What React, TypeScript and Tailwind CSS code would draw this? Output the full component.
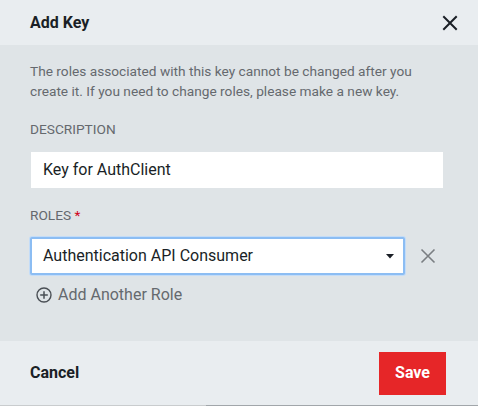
import React from "react";

export default function App() {
  return (
    <div
      className="w-[478px] h-[406px] flex flex-col overflow-hidden"
      style={{ fontFamily: "Roboto, 'Liberation Sans', sans-serif" }}
    >
      <div className="h-[45px] shrink-0 bg-[#e9edf0] flex items-center justify-between pl-[30px] pr-[20px]">
        <h2 className="text-[16px] font-bold text-[#1a1f26]">Add Key</h2>
        <svg width="16" height="16" viewBox="0 0 16 16" className="mt-[1px]">
          <path d="M2 2 L14 14 M14 2 L2 14" stroke="#1a1f26" strokeWidth="2" strokeLinecap="square" />
        </svg>
      </div>

      <div className="h-[296px] shrink-0 bg-[#dfe4e7] px-[30px] pt-[16px]">
        <p className="text-[13.7px] leading-[20px] text-[#65696e] w-[400px]">
          The roles associated with this key cannot be changed after you create it. If you need to change roles, please make a new key.
        </p>
        <div className="mt-[18px] text-[13.7px] leading-[20px] text-[#65696e] uppercase">Description</div>
        <div className="mt-[13px] ml-[1px] w-[412px] h-[36px] bg-white flex items-center pl-[12px] text-[16px] text-[#1a1f26]">
          Key for AuthClient
        </div>
        <div className="mt-[17px] text-[13.7px] leading-[20px] text-[#65696e] uppercase">
          Roles <span className="text-[#d0021b]">*</span>
        </div>
        <div className="mt-[12px] flex items-center">
          <div className="w-[375px] h-[38px] bg-white border-2 border-[#8cbdf3] rounded-[2px] shadow-[0_0_0_1px_#c3dcf8] flex items-center justify-between pl-[11px] pr-[9px] text-[16px] text-[#1a1f26]">
            <span>Authentication API Consumer</span>
            <svg width="8" height="5" viewBox="0 0 8 5">
              <path d="M0 0 L8 0 L4 4.5 Z" fill="#1a1f26" />
            </svg>
          </div>
          <svg width="16" height="16" viewBox="0 0 16 16" className="ml-[15px]">
            <path d="M1.5 1.5 L14.5 14.5 M14.5 1.5 L1.5 14.5" stroke="#7a7e82" strokeWidth="1.6" />
          </svg>
        </div>
        <div className="mt-[8px] ml-[6px] flex items-center gap-[6px] text-[16px] text-[#65696e]">
          <svg width="16" height="16" viewBox="0 0 16 16">
            <circle cx="8" cy="8" r="7" fill="none" stroke="#4a4f55" strokeWidth="1.4" />
            <path d="M8 4.2 V11.8 M4.2 8 H11.8" stroke="#4a4f55" strokeWidth="1.5" />
          </svg>
          <span>Add Another Role</span>
        </div>
      </div>

      <div className="h-[64px] shrink-0 bg-[#e9edf0] flex items-center justify-between pl-[30px] pr-[32px]">
        <span className="text-[16px] font-bold text-[#1a1f26]">Cancel</span>
        <button className="w-[67px] h-[43px] bg-[#e62628] text-white text-[16px] font-bold">Save</button>
      </div>
      <div className="h-[1px] shrink-0 flex">
        <div className="w-[206px] bg-[#c9ccce]" />
        <div className="flex-1 bg-[#a1a6aa]" />
      </div>
    </div>
  );
}
